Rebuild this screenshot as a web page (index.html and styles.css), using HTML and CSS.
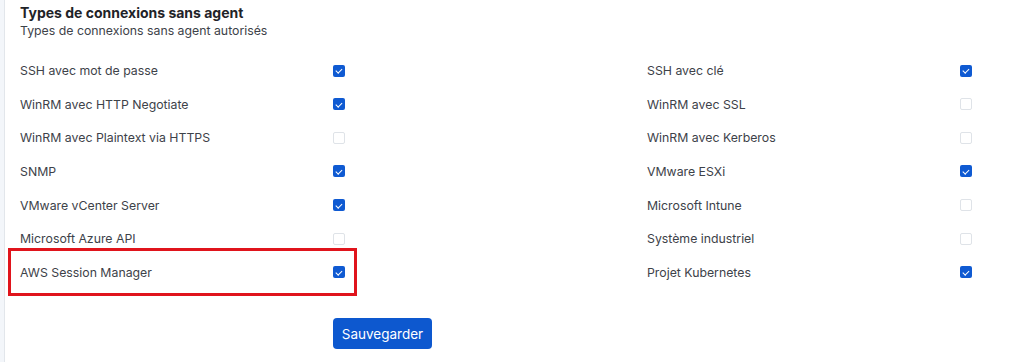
FILE: index.html
```html
<!DOCTYPE html>
<html lang="fr">
<head>
    <meta charset="UTF-8">
    <title>Types de connexions sans agent</title>
    <link rel="stylesheet" href="styles.css">
</head>
<body>
    <div class="sidebar"></div>
    <div class="panel">
        <div class="title">Types de connexions sans agent</div>
        <div class="subtitle">Types de connexions sans agent autorisés</div>

        <div class="options">
            <label class="option"><span>SSH avec mot de passe</span><span class="box checked"></span></label>
            <label class="option"><span>SSH avec clé</span><span class="box checked"></span></label>
            <label class="option"><span>WinRM avec HTTP Negotiate</span><span class="box checked"></span></label>
            <label class="option"><span>WinRM avec SSL</span><span class="box"></span></label>
            <label class="option"><span>WinRM avec Plaintext via HTTPS</span><span class="box"></span></label>
            <label class="option"><span>WinRM avec Kerberos</span><span class="box"></span></label>
            <label class="option"><span>SNMP</span><span class="box checked"></span></label>
            <label class="option"><span>VMware ESXi</span><span class="box checked"></span></label>
            <label class="option"><span>VMware vCenter Server</span><span class="box checked"></span></label>
            <label class="option"><span>Microsoft Intune</span><span class="box"></span></label>
            <label class="option"><span>Microsoft Azure API</span><span class="box"></span></label>
            <label class="option"><span>Système industriel</span><span class="box"></span></label>
            <label class="option highlight"><span>AWS Session Manager</span><span class="box checked"></span></label>
            <label class="option"><span>Projet Kubernetes</span><span class="box checked"></span></label>
        </div>

        <button class="save">Sauvegarder</button>
    </div>
</body>
</html>
```

FILE: styles.css
```css
body {
    margin: 0;
    font-family: Inter, "Noto Sans", sans-serif;
    color: #3d4249;
    background: white;
    display: flex;
    min-height: 362px;
}
.sidebar {
    width: 4px;
    background: #f3f6fa;
    border-right: 1px solid #e2e6eb;
}
.panel {
    padding: 3px 0 0 15px;
}
.title {
    font-size: 14px;
    font-weight: 700;
    color: #1f2328;
    line-height: 19px;
}
.subtitle {
    font-size: 12.3px;
    line-height: 18px;
    margin-bottom: 20.5px;
}
.options {
    display: grid;
    grid-template-columns: 325px 325px;
    column-gap: 302px;
    row-gap: 13.67px;
}
.option {
    position: relative;
    display: flex;
    justify-content: space-between;
    align-items: center;
    height: 20px;
    font-size: 12.3px;
}
.box {
    width: 10px;
    height: 10px;
    border: 1px solid #dfe3e8;
    border-radius: 2px;
    background: white;
}
.box.checked {
    width: 12px;
    height: 12px;
    border: none;
    background: #0f5ad2;
    position: relative;
}
.box.checked::after {
    content: "";
    position: absolute;
    left: 4px;
    top: 2.5px;
    width: 2.5px;
    height: 5px;
    border: solid white;
    border-width: 0 1.5px 1.5px 0;
    transform: rotate(45deg);
}
.highlight::before {
    content: "";
    position: absolute;
    left: -12px;
    right: -12px;
    top: -14px;
    bottom: -14px;
    border: 3px solid #e0141c;
}
.save {
    margin: 36px 0 0 313px;
    width: 99px;
    height: 31px;
    border: none;
    border-radius: 4px;
    background: #0d58cf;
    color: white;
    font-family: Inter, "Noto Sans", sans-serif;
    font-size: 13.5px;
}
```
